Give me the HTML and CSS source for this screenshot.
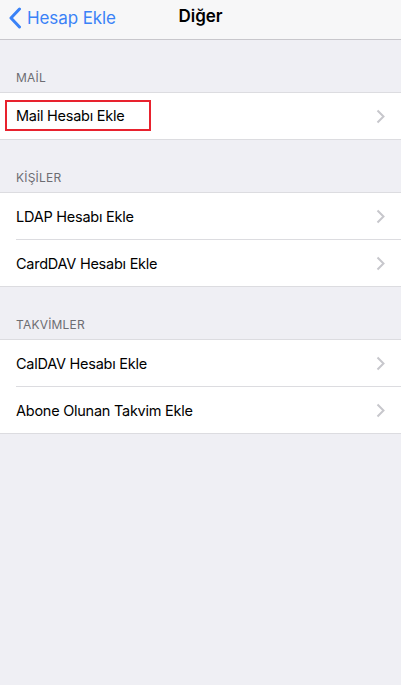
FILE: index.html
```html
<!DOCTYPE html>
<html lang="tr">
<head>
    <meta charset="UTF-8">
    <meta name="viewport" content="width=device-width, initial-scale=1.0">
    <title>Diğer</title>
    <link rel="stylesheet" href="styles.css">
</head>
<body>
    <div class="navbar">
        <a class="back" href="#">
            <svg class="back-icon" width="14" height="22" viewBox="0 0 14 22">
                <path d="M11.5 2 L3 11 L11.5 20" fill="none" stroke="#3a82f7" stroke-width="3" stroke-linecap="round" stroke-linejoin="round"/>
            </svg>
            <span>Hesap Ekle</span>
        </a>
        <div class="title">Diğer</div>
    </div>

    <div class="section-header">MAİL</div>
    <div class="group">
        <div class="row">
            <span class="label highlight">Mail Hesabı Ekle</span>
            <svg class="chevron" width="9" height="15" viewBox="0 0 9 15"><path d="M1.5 1.5 L7.5 7.5 L1.5 13.5" fill="none" stroke="#c7c7cc" stroke-width="2"/></svg>
        </div>
    </div>

    <div class="section-header">KİŞİLER</div>
    <div class="group">
        <div class="row">
            <span class="label">LDAP Hesabı Ekle</span>
            <svg class="chevron" width="9" height="15" viewBox="0 0 9 15"><path d="M1.5 1.5 L7.5 7.5 L1.5 13.5" fill="none" stroke="#c7c7cc" stroke-width="2"/></svg>
        </div>
        <div class="row">
            <span class="label">CardDAV Hesabı Ekle</span>
            <svg class="chevron" width="9" height="15" viewBox="0 0 9 15"><path d="M1.5 1.5 L7.5 7.5 L1.5 13.5" fill="none" stroke="#c7c7cc" stroke-width="2"/></svg>
        </div>
    </div>

    <div class="section-header">TAKVİMLER</div>
    <div class="group">
        <div class="row">
            <span class="label">CalDAV Hesabı Ekle</span>
            <svg class="chevron" width="9" height="15" viewBox="0 0 9 15"><path d="M1.5 1.5 L7.5 7.5 L1.5 13.5" fill="none" stroke="#c7c7cc" stroke-width="2"/></svg>
        </div>
        <div class="row">
            <span class="label">Abone Olunan Takvim Ekle</span>
            <svg class="chevron" width="9" height="15" viewBox="0 0 9 15"><path d="M1.5 1.5 L7.5 7.5 L1.5 13.5" fill="none" stroke="#c7c7cc" stroke-width="2"/></svg>
        </div>
    </div>
</body>
</html>
```

FILE: styles.css
```css
body {
    font-family: Inter, "Noto Sans", sans-serif;
    background-color: #efeff4;
    margin: 0;
    color: #000;
}

.navbar {
    height: 39px;
    background-color: #f7f7f8;
    border-bottom: 1px solid #c8c7cc;
    display: flex;
    align-items: center;
    position: relative;
}

.back {
    display: flex;
    align-items: center;
    gap: 5px;
    padding-left: 8px;
    margin-top: -4px;
    color: #3a82f7;
    text-decoration: none;
    font-size: 17px;
    letter-spacing: -0.1px;
}

.back-icon {
    display: block;
}

.title {
    position: absolute;
    left: 0;
    right: 0;
    top: 0;
    line-height: 32px;
    text-align: center;
    font-size: 17px;
    font-weight: 600;
    pointer-events: none;
}

.section-header {
    height: 52px;
    box-sizing: border-box;
    display: flex;
    align-items: flex-end;
    padding: 0 16px 7px;
    font-size: 12px;
    color: #6d6d72;
    letter-spacing: 0.2px;
}

.group {
    background-color: #fff;
    border-top: 1px solid #dcdce0;
    border-bottom: 1px solid #dcdce0;
}

.row {
    height: 46px;
    display: flex;
    align-items: center;
    justify-content: space-between;
    padding: 0 16px;
    position: relative;
    font-size: 14.5px;
    letter-spacing: -0.25px;
}

.row + .row::before {
    content: "";
    position: absolute;
    top: -1px;
    left: 16px;
    right: 0;
    border-top: 1px solid #dcdce0;
}

.row + .row {
    margin-top: 1px;
}

.label.highlight {
    margin-left: -11px;
    margin-top: -2px;
    padding: 5px 25px 5px 9px;
    border: 2px solid #e8222e;
}

.chevron {
    display: block;
}
```
